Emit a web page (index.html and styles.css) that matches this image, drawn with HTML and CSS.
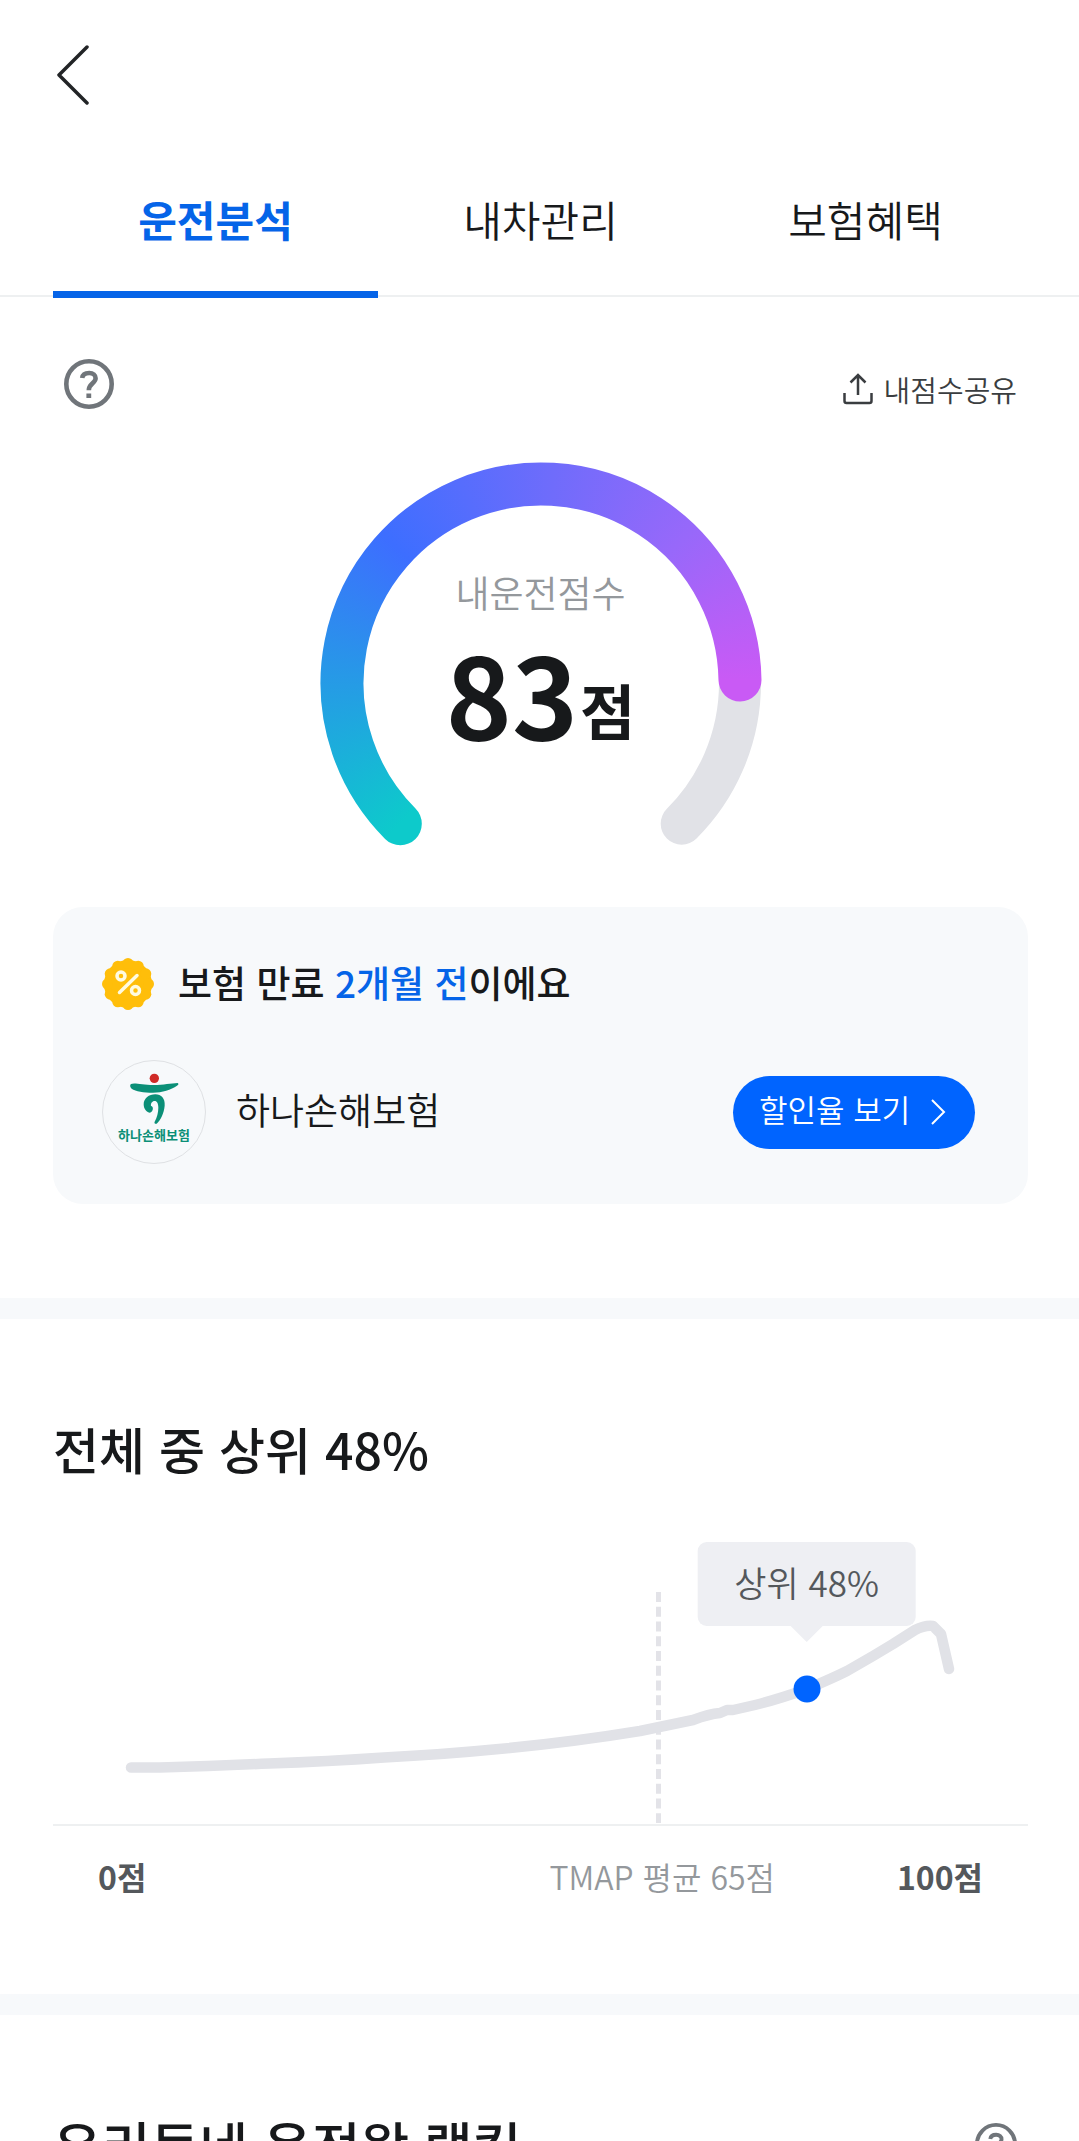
FILE: index.html
```html
<!DOCTYPE html>
<html lang="ko">
<head>
<meta charset="utf-8">
<meta name="viewport" content="width=device-width, initial-scale=1">
<title>운전분석</title>
<link rel="stylesheet" href="styles.css">
</head>
<body>
<svg class="defs" aria-hidden="true">
  <symbol id="icon-help" viewBox="0 0 50 50">
    <circle cx="25" cy="25" r="22.700" fill="none" stroke="currentColor" stroke-width="4.600"/>
    <path d="M18.200 19C18.600 15.800 21.200 14 25.200 14c3.900 0 6.400 2.100 6.400 5.300 0 5-6.800 5.300-6.800 12" fill="none" stroke="currentColor" stroke-width="4.600"/>
    <rect x="22.400" y="34.500" width="4.800" height="4.500" fill="currentColor"/>
  </symbol>
</svg>
<div class="app">
  <header class="topbar">
    <button class="icon-button" type="button" aria-label="뒤로">
      <svg width="34" height="60" viewBox="0 0 34 60"><path d="M31 2 3 30l28 28" fill="none" stroke="#222426" stroke-width="3.500" stroke-linecap="round" stroke-linejoin="round"/></svg>
    </button>
  </header>

  <nav class="tabs">
    <a class="tab tab-active" href="#analysis" aria-current="page">운전분석</a>
    <a class="tab" href="#car">내차관리</a>
    <a class="tab" href="#benefit">보험혜택</a>
  </nav>

  <main>
    <section class="score" id="analysis">
      <div class="score-actions">
        <button class="icon-button help" type="button" aria-label="도움말"><svg width="50" height="50"><use href="#icon-help"/></svg></button>
        <button class="share" type="button">
          <svg width="30" height="32" viewBox="0 0 30 32" fill="none" stroke="#3a3d40" stroke-width="2.500">
            <path d="M1.500 20v8q0 2 2 2h23q2 0 2-2v-8M15 22V2M7.500 9.500 15 2l7.500 7.500"/>
          </svg>
          내점수공유
        </button>
      </div>

      <div class="gauge">
        <svg class="gauge-ring" viewBox="0 0 442 386" aria-hidden="true">
          <defs>
            <mask id="gauge-mask" maskUnits="userSpaceOnUse" x="0" y="0" width="442" height="442">
              <path d="M80.300 361.700A199 199 0 1 1 420 218" fill="none" stroke="#fff" stroke-width="43" stroke-linecap="round"/>
            </mask>
          </defs>
          <path d="M80.300 361.700A199 199 0 1 1 361.700 361.700" fill="none" stroke="#e1e2e7" stroke-width="42" stroke-linecap="round"/>
          <g mask="url(#gauge-mask)">
            <foreignObject x="0" y="0" width="442" height="442"><div class="gauge-fill"></div></foreignObject>
          </g>
        </svg>
        <div class="gauge-text">
          <p class="gauge-label">내운전점수</p>
          <p class="gauge-value">83<span class="gauge-unit">점</span></p>
        </div>
      </div>

      <div class="card">
        <div class="card-head">
          <svg width="52" height="52" viewBox="0 0 52 52" aria-hidden="true">
            <g fill="#ffbe0a">
              <circle cx="26" cy="26" r="24"/>
              <circle cx="26" cy="5.500" r="5.500"/><circle cx="36.200" cy="8.200" r="5.500"/><circle cx="43.800" cy="15.800" r="5.500"/>
              <circle cx="46.500" cy="26" r="5.500"/><circle cx="43.800" cy="36.200" r="5.500"/><circle cx="36.200" cy="43.800" r="5.500"/>
              <circle cx="26" cy="46.500" r="5.500"/><circle cx="15.800" cy="43.800" r="5.500"/><circle cx="8.200" cy="36.200" r="5.500"/>
              <circle cx="5.500" cy="26" r="5.500"/><circle cx="8.200" cy="15.800" r="5.500"/><circle cx="15.800" cy="8.200" r="5.500"/>
            </g>
            <g fill="none" stroke="#fffbe0" stroke-width="3.500" stroke-linecap="round">
              <circle cx="19" cy="18" r="4"/><circle cx="33.500" cy="32.500" r="4"/><path d="M35 17.500 17.500 34.500"/>
            </g>
          </svg>
          <h2 class="card-title">보험 만료 <strong>2개월 전</strong>이에요</h2>
        </div>
        <div class="card-row">
          <div class="insurer-logo">
            <svg width="49" height="52" viewBox="121 68 147 156" aria-hidden="true">
              <circle cx="194" cy="84" r="14" fill="#cf2a27"/>
              <path d="M124 101c10-5 34 3 68 3 30 0 52-5 72-6 4 2 2 6-2 8-18 12-44 21-72 21-28 0-52-4-64-12-5-5-6-11-2-14z" fill="#0b8f77"/>
              <path d="M197 132c18 0 30 13 28 34-2 22-12 43-24 54-5 2-8-2-6-6 7-13 11-28 11-42 0-12-4-20-11-20-8 0-12 7-11 15 8 0 8 17-3 20-9 0-19-10-19-25 0-18 16-30 35-30z" fill="#0b8f77"/>
            </svg>
            <span class="insurer-mark">하나손해보험</span>
          </div>
          <span class="insurer-name">하나손해보험</span>
          <button class="pill" type="button"><span class="pill-label">할인율 보기</span>
            <svg width="16" height="28" viewBox="0 0 16 28"><path d="m2 2 12 12L2 26" fill="none" stroke="#fff" stroke-width="2"/></svg>
          </button>
        </div>
      </div>
    </section>

    <section class="panel">
      <h2 class="panel-title">전체 중 상위 48%</h2>
      <div class="chart">
        <svg class="chart-plot" viewBox="0 0 975 282" aria-hidden="true">
          <path d="M605.500 50V281" stroke="#e3e3e8" stroke-width="5" stroke-dasharray="10 4.750"/>
          <path d="M78 225.500L107 225.500Q161 224 216 221.500Q275 219.500 331 215.500Q390 212.500 446 207Q520 200 587 189L640 178Q656 172 667 171L674 168L680 168L702 163Q726 157 754 147Q780 136 794 129L820 114L840 102L862 88Q872 83 880 84L888 92L896 127" fill="none" stroke="#e1e2e7" stroke-width="10.500" stroke-linecap="round" stroke-linejoin="round"/>
          <circle cx="754" cy="147" r="13.500" fill="#0064ff"/>
        </svg>
        <div class="tooltip" style="left: 77.3%">상위 48%</div>
      </div>
      <div class="axis">
        <strong>0점</strong>
        <span>TMAP 평균 65점</span>
        <strong class="axis-end">100점</strong>
      </div>
    </section>

    <section class="panel panel-ranking">
      <h2 class="panel-title">우리동네 운전왕 랭킹</h2>
      <button class="icon-button help" type="button" aria-label="랭킹 도움말"><svg width="42" height="42"><use href="#icon-help"/></svg></button>
    </section>
  </main>
</div>
</body>
</html>
```

FILE: styles.css
```css
* { box-sizing: border-box; }

body {
  margin: 0;
  background: #fff;
  color: #17191b;
  font-family: "Noto Sans CJK KR", "Noto Sans", sans-serif;
}

h2, p { margin: 0; }

button {
  margin: 0;
  padding: 0;
  border: 0;
  background: none;
  color: inherit;
  font: inherit;
  cursor: pointer;
}

svg { display: block; flex: none; }

.defs { position: absolute; width: 0; height: 0; }

.app {
  height: 100vh;
  overflow-y: auto;
  scrollbar-width: none;
}

.topbar { display: flex; padding: 45px 56px 41px; }

.icon-button { display: flex; }

.help { color: #70757a; }

.tabs {
  display: flex;
  height: 151px;
  padding: 0 51px 0 53px;
  border-bottom: 2px solid #eef0f1;
}

.tab {
  flex: 1;
  height: 152px;
  padding-top: 41px;
  border-bottom: 7px solid transparent;
  color: #17191b;
  font-size: 42px;
  font-weight: 350;
  line-height: 64px;
  text-align: center;
  text-decoration: none;
}

.tab-active {
  border-bottom-color: #0564e8;
  color: #0564e8;
  font-weight: 700;
}

.score {
  padding: 62px 51px 94px 53px;
}

.score-actions {
  display: flex;
  align-items: flex-start;
  justify-content: space-between;
  padding: 0 11px;
}

.share {
  display: flex;
  align-items: center;
  gap: 11px;
  padding-top: 10px;
  color: #3a3d40;
  font-size: 29px;
  font-weight: 350;
  line-height: 40px;
}

.gauge {
  display: grid;
  width: 442px;
  margin: 53px auto 59px;
}

.gauge-ring, .gauge-text { grid-area: 1 / 1; }

.gauge-ring { width: 100%; }

.gauge-fill {
  width: 442px;
  height: 442px;
  background: conic-gradient(from 225deg, #0dcacb 0deg, #3d6eff 88deg, #6f6cfb 138deg, #9868fa 180deg, #c95af5 224deg, #c95af5 290deg, #0dcacb 291deg);
}

.gauge-text { padding-top: 104px; text-align: center; }

.gauge-label {
  color: #94989c;
  font-size: 37px;
  font-weight: 350;
  line-height: 52px;
}

.gauge-value {
  margin-top: 13px;
  font-size: 112px;
  font-weight: 700;
  line-height: 120px;
}

.gauge-unit {
  margin-left: 2px;
  font-size: 60px;
  line-height: 60px;
  vertical-align: 5px;
}

.card {
  padding: 49px 53px 40px 49px;
  border-radius: 30px;
  background: #f7f9fb;
}

.card-head { display: flex; align-items: center; gap: 24px; }

.card-title { padding-bottom: 4px; font-size: 37px; font-weight: 500; line-height: 52px; }

.card-title strong { color: #0564e8; font-weight: 500; }

.card-row { display: flex; align-items: center; margin-top: 48px; }

.insurer-logo {
  display: flex;
  flex-direction: column;
  align-items: center;
  width: 104px;
  height: 104px;
  padding-top: 12px;
  border: 1px solid #dfe1e4;
  border-radius: 50%;
}

.insurer-mark {
  color: #0b8f77;
  font-size: 13px;
  font-weight: 700;
  line-height: 20px;
  white-space: nowrap;
}

.insurer-name {
  flex: 1;
  margin-left: 30px;
  padding-bottom: 6px;
  font-size: 37px;
  font-weight: 350;
  line-height: 52px;
}

.pill {
  display: flex;
  align-items: center;
  justify-content: space-between;
  width: 242px;
  height: 73px;
  padding: 0 29px 0 26px;
  border-radius: 37px;
  background: #0064ff;
  color: #fff;
  font-size: 31px;
  font-weight: 350;
  line-height: 40px;
  white-space: nowrap;
}

.pill-label { padding-bottom: 6px; }

.panel {
  padding: 91px 51px 92px 53px;
  border-top: 21px solid #f7f9fb;
}

.panel-title { font-size: 50px; font-weight: 500; line-height: 76px; }

.chart {
  position: relative;
  margin-top: 56px;
  border-bottom: 2px solid #eef0f1;
}

.chart-plot { width: 100%; }

.tooltip {
  position: absolute;
  top: 0;
  padding: 0 37px 4px;
  border-radius: 9px;
  background: #eeeff3;
  color: #54585c;
  font-size: 35px;
  font-weight: 350;
  line-height: 80px;
  white-space: nowrap;
  transform: translateX(-50%);
}

.tooltip::after {
  content: "";
  position: absolute;
  top: 100%;
  left: 50%;
  border: 16px solid transparent;
  border-top-color: #eeeff3;
  border-bottom: 0;
  transform: translateX(-50%);
}

.axis {
  display: grid;
  grid-template-columns: 1fr auto 208px;
  padding: 25px 45px 1px 45px;
  color: #94989c;
  font-size: 32px;
  font-weight: 350;
  line-height: 50px;
}

.axis strong { color: #54585c; font-weight: 700; }

.axis-end { text-align: right; }

.panel-ranking {
  display: flex;
  align-items: center;
  justify-content: space-between;
  padding-right: 62px;
}

.panel-ranking .panel-title { font-size: 53px; }
```
